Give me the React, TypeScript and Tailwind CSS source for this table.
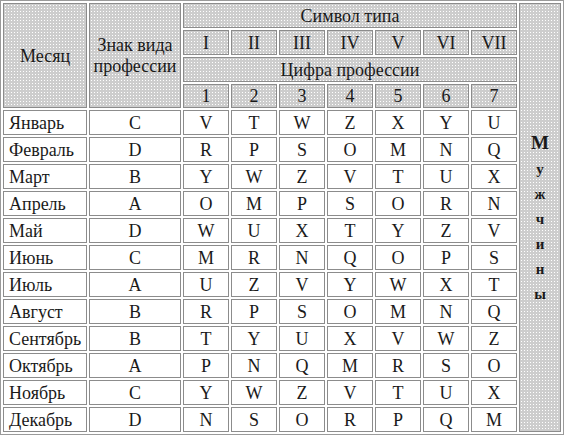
import React from "react";

const rows: [string, string, string[]][] = [
  ["Январь", "C", ["V", "T", "W", "Z", "X", "Y", "U"]],
  ["Февраль", "D", ["R", "P", "S", "O", "M", "N", "Q"]],
  ["Март", "B", ["Y", "W", "Z", "V", "T", "U", "X"]],
  ["Апрель", "A", ["O", "M", "P", "S", "O", "R", "N"]],
  ["Май", "D", ["W", "U", "X", "T", "Y", "Z", "V"]],
  ["Июнь", "C", ["M", "R", "N", "Q", "O", "P", "S"]],
  ["Июль", "A", ["U", "Z", "V", "Y", "W", "X", "T"]],
  ["Август", "B", ["R", "P", "S", "O", "M", "N", "Q"]],
  ["Сентябрь", "B", ["T", "Y", "U", "X", "V", "W", "Z"]],
  ["Октябрь", "A", ["P", "N", "Q", "M", "R", "S", "O"]],
  ["Ноябрь", "C", ["Y", "W", "Z", "V", "T", "U", "X"]],
  ["Декабрь", "D", ["N", "S", "O", "R", "P", "Q", "M"]],
];

const roman = ["I", "II", "III", "IV", "V", "VI", "VII"];
const hd =
  "flex items-center justify-center text-center border border-[#8c8c8c] bg-[#cdcdcd] bg-[radial-gradient(#ffffff_0.6px,transparent_0.9px)] bg-[size:3px_3px]";
const td = "flex items-center justify-center border border-[#8c8c8c] bg-white";

export default function App() {
  return (
    <div className="w-[564px] h-[435px] overflow-hidden bg-white">
      <div className="font-['Liberation_Serif'] text-[18px] leading-none text-[#1a1a1a] w-[564px] border border-[#9a9a9a] p-[2px] grid grid-cols-[84px_92px_repeat(7,46px)_42px] grid-rows-[25px_25px_25px_24px_repeat(12,25px)] gap-[2px]">
        <div className={hd + " row-span-4"}>Месяц</div>
        <div className={hd + " row-span-4 leading-[21px]"}>
          Знак вида
          <br />
          профессии
        </div>
        <div className={hd + " col-span-7"}>Символ типа</div>
        <div className={hd + " row-span-16 flex-col gap-[10px] font-bold text-[15px]"}>
          <span className="text-[19px]">М</span>
          <span>у</span>
          <span>ж</span>
          <span>ч</span>
          <span>и</span>
          <span>н</span>
          <span>ы</span>
        </div>
        {roman.map((r) => (
          <div key={r} className={hd}>
            {r}
          </div>
        ))}
        <div className={hd + " col-span-7"}>Цифра профессии</div>
        {[1, 2, 3, 4, 5, 6, 7].map((n) => (
          <div key={n} className={hd}>
            {n}
          </div>
        ))}
        {rows.map(([m, z, vals]) => (
          <React.Fragment key={m}>
            <div className={td + " justify-start pl-[5px]"}>{m}</div>
            <div className={td}>{z}</div>
            {vals.map((v, i) => (
              <div key={i} className={td}>
                {v}
              </div>
            ))}
          </React.Fragment>
        ))}
      </div>
    </div>
  );
}
